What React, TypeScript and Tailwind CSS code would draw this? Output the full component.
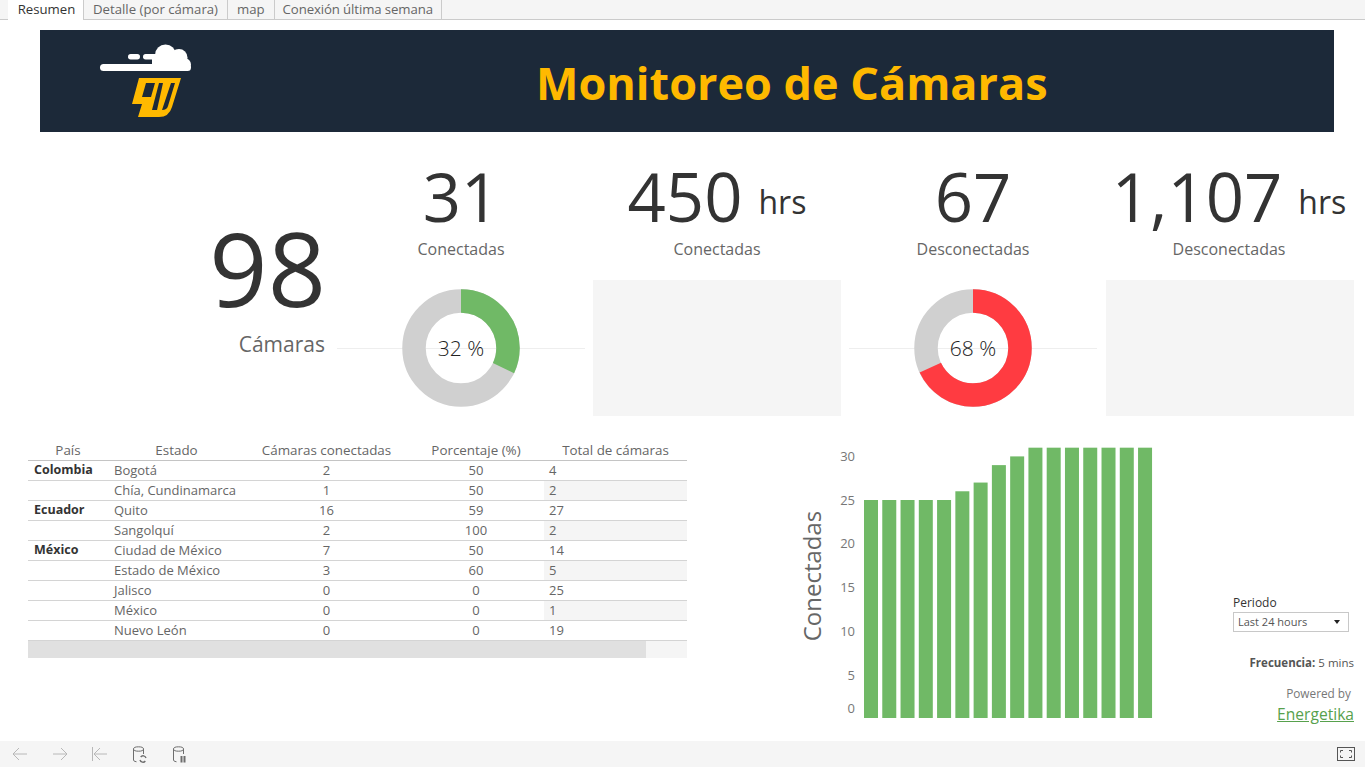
const font = "font-['Open_Sans',sans-serif]";

const tabs = ["Resumen", "Detalle (por cámara)", "map", "Conexión última semana"];

const rows = [
  { pais: "Colombia", estado: "Bogotá", con: 2, pct: 50, total: 4 },
  { pais: "", estado: "Chía, Cundinamarca", con: 1, pct: 50, total: 2 },
  { pais: "Ecuador", estado: "Quito", con: 16, pct: 59, total: 27 },
  { pais: "", estado: "Sangolquí", con: 2, pct: 100, total: 2 },
  { pais: "México", estado: "Ciudad de México", con: 7, pct: 50, total: 14 },
  { pais: "", estado: "Estado de México", con: 3, pct: 60, total: 5 },
  { pais: "", estado: "Jalisco", con: 0, pct: 0, total: 25 },
  { pais: "", estado: "México", con: 0, pct: 0, total: 1 },
  { pais: "", estado: "Nuevo León", con: 0, pct: 0, total: 19 },
];

const bars = [25, 25, 25, 25, 25, 26, 27, 29, 30, 31, 31, 31, 31, 31, 31, 31];
const ticks = [
  { label: "30", y: 461 },
  { label: "25", y: 505 },
  { label: "20", y: 548 },
  { label: "15", y: 592 },
  { label: "10", y: 636 },
  { label: "5", y: 680 },
  { label: "0", y: 713 },
];

const Logo = () => (
  <svg width="100" height="80" viewBox="0 0 100 80">
    <rect x="5" y="23" width="91" height="7" rx="3.5" fill="#fff" />
    <rect x="33" y="13" width="12" height="5.5" rx="2.7" fill="#fff" />
    <rect x="48" y="13" width="18" height="5.5" rx="2.7" fill="#fff" />
    <rect x="57" y="16" width="32" height="10" fill="#fff" />
    <circle cx="70.5" cy="14" r="10.5" fill="#fff" />
    <circle cx="84" cy="16.5" r="8.5" fill="#fff" />
    <circle cx="89.5" cy="23.5" r="6.5" fill="#fff" />
    <path d="M44 37H86L77 66Q74 76 64 76H43L47 63H37Z" fill="#ffb900" />
    <path d="M51 42H60L56 56H47Z" fill="#1c2939" />
    <path d="M64 42H68L62 69H57Z" fill="#1c2939" />
    <path d="M76 42H80L73 65Q72 69 67 69Z" fill="#1c2939" />
  </svg>
);

const Donut = ({ pct, color }: { pct: number; color: string }) => {
  const r = 47;
  const c = 2 * Math.PI * r;
  return (
    <div className="relative flex h-[136px] items-center justify-center">
      <div className="absolute inset-x-0 top-[68px] h-px bg-[#eeeeee]" />
      <svg width="118" height="118" viewBox="0 0 118 118" className="relative">
        <circle cx="59" cy="59" r={r} fill="none" stroke="#d0d0d0" strokeWidth="23.5" />
        <circle
          cx="59"
          cy="59"
          r={r}
          fill="none"
          stroke={color}
          strokeWidth="23.5"
          strokeDasharray={`${(c * pct) / 100} ${c}`}
          transform="rotate(-90 59 59)"
        />
      </svg>
      <span className="absolute mt-0.5 text-[21px] font-light text-[#222222]">{pct} %</span>
    </div>
  );
};

const Kpi = ({
  value,
  unit,
  label,
  last,
  children,
}: {
  value: string;
  unit?: string;
  label: string;
  last?: boolean;
  children: React.ReactNode;
}) => (
  <div className="flex w-[256px] flex-col">
    <div className="flex h-[76px] items-center justify-center whitespace-nowrap text-[#333333]">
      <span className="text-[67px] leading-none">{value}</span>
      {unit && <span className="ml-4 mt-3 text-[32px] leading-none">{unit}</span>}
    </div>
    <div className="mt-[5px] text-center text-[16px] leading-6 text-[#666666]">{label}</div>
    <div className={last ? "mt-[19px] pl-[5px] pr-[3px]" : "mt-[19px] px-1"}>{children}</div>
  </div>
);

const Table = () => (
  <div className="w-[659px] text-[13px] text-[#666666]">
    <div className="flex h-5 items-center border-b border-[#c4c4c4] text-center text-[13.4px]">
      <div className="w-20">País</div>
      <div className="w-[137px]">Estado</div>
      <div className="w-[163px]">Cámaras conectadas</div>
      <div className="w-[136px]">Porcentaje (%)</div>
      <div className="w-[143px]">Total de cámaras</div>
    </div>
    {rows.map((row) => (
      <div key={row.estado} className="flex h-5 items-center border-b border-[#d4d4d4]">
        <div className="w-20 pl-1.5 text-[12.5px] font-bold text-[#333333]">{row.pais}</div>
        <div className="w-[137px] pl-1.5">{row.estado}</div>
        <div className="w-[163px] text-center">{row.con}</div>
        <div className="w-[136px] text-center">{row.pct}</div>
        <div className={`h-full w-[143px] pl-[5px] leading-[19px] ${row.total === 2 || row.total === 5 || row.total === 1 ? "bg-[#f5f5f5]" : ""}`}>
          {row.total}
        </div>
      </div>
    ))}
    <div className="h-[17px] bg-[#f5f5f5]">
      <div className="h-full w-[618px] bg-[#e0e0e0]" />
    </div>
  </div>
);

const Chart = () => (
  <svg width="370" height="290" viewBox="790 440 370 290" className="block shrink-0">
    <text
      transform="rotate(-90 821 576)"
      x="821"
      y="576"
      textAnchor="middle"
      fontSize="24"
      fill="#666666"
    >
      Conectadas
    </text>
    {ticks.map((t) => (
      <text key={t.label} x="855" y={t.y} textAnchor="end" fontSize="13" fill="#777777">
        {t.label}
      </text>
    ))}
    {bars.map((v, i) => (
      <rect key={i} x={864 + i * 18.27} y={718 - v * 8.72} width="14" height={v * 8.72} fill="#70b966" />
    ))}
  </svg>
);

const ArrowLeft = () => (
  <svg width="16" height="14" viewBox="0 0 16 14" fill="none" stroke="#b8b8b8">
    <path d="M15 7H1M7 1L1 7l6 6" />
  </svg>
);

const ArrowRight = () => (
  <svg width="16" height="14" viewBox="0 0 16 14" fill="none" stroke="#b8b8b8">
    <path d="M1 7h14M9 1l6 6-6 6" />
  </svg>
);

const ArrowFirst = () => (
  <svg width="16" height="14" viewBox="0 0 16 14" fill="none" stroke="#b8b8b8">
    <path d="M.5 0v14M15 7H2M8 1L2 7l6 6" />
  </svg>
);

const DbIcon = ({ pause }: { pause?: boolean }) => (
  <svg width="16" height="17" viewBox="0 0 16 17" fill="none" stroke="#6e6e6e">
    <ellipse cx="6.5" cy="3" rx="5" ry="2.2" />
    <path d="M1.5 3v11q0 1.5 3 1.8M11.5 3v5" />
    {pause ? (
      <path d="M9.5 10v6.5M12.5 10v6.5" strokeWidth="2" />
    ) : (
      <path d="M14 12a3 3 0 0 0-5.3-1M8 14a3 3 0 0 0 5.3 1" strokeWidth="1.4" />
    )}
  </svg>
);

const FullscreenIcon = () => (
  <svg width="18" height="14" viewBox="0 0 18 14" fill="none" stroke="#555555">
    <rect x=".5" y=".5" width="17" height="13" />
    <path d="M3.5 5.5v-2h2.5M12 3.5h2.5v2M14.5 8.5v2H12M6 10.5H3.5v-2" />
  </svg>
);

const App = () => (
  <div className={`flex h-[767px] w-[1365px] flex-col overflow-hidden bg-white ${font}`}>
    <div className="flex h-5 shrink-0 border-b border-[#cbcbcb] bg-[#f5f5f5] pl-2 text-[13.2px] leading-[19px] text-[#666666]">
      {tabs.map((tab, i) => (
        <div
          key={tab}
          className={
            i === 0
              ? "-mb-px h-5 w-[76px] border-r border-[#cbcbcb] bg-white pl-[2px] text-center text-[#333333]"
              : i === 3
                ? "border-r border-[#cbcbcb] pl-[8px] pr-[8px] tracking-[-0.1px]"
                : "border-r border-[#cbcbcb] px-[9px]"
          }
        >
          {tab}
        </div>
      ))}
    </div>

    <div className="ml-10 mt-2.5 flex h-[102px] w-[1294px] shrink-0 items-center bg-[#1c2939]">
      <div className="ml-[55px]">
        <Logo />
      </div>
      <h1 className="ml-[341px] mt-1 text-[45px] font-bold text-[#ffb900]">Monitoreo de Cámaras</h1>
    </div>

    <div className="flex h-[284px] shrink-0 pt-7">
      <div className="flex w-[333px] flex-col items-end pr-2 pt-[57px]">
        <div className="-mr-px text-[102px] leading-none text-[#333333]">98</div>
        <div className="mt-[11px] text-[21px] leading-7 text-[#666666]">Cámaras</div>
      </div>
      <Kpi value="31" label="Conectadas">
        <Donut pct={32} color="#70b966" />
      </Kpi>
      <Kpi value="450" unit="hrs" label="Conectadas">
        <div className="h-[136px] bg-[#f5f5f5]" />
      </Kpi>
      <Kpi value="67" label="Desconectadas">
        <Donut pct={68} color="#ff3b41" />
      </Kpi>
      <Kpi value="1,107" unit="hrs" label="Desconectadas" last>
        <div className="h-[136px] bg-[#f5f5f5]" />
      </Kpi>
    </div>

    <div className="flex min-h-0 flex-1 pl-7 pt-[25px]">
      <Table />
      <div className="ml-[103px] -mt-px">
        <Chart />
      </div>
      <div className="ml-[73px] mt-[154px] flex w-[116px] flex-col items-end text-[12px] text-[#555555]">
        <div className="w-full leading-4 text-[#333333]">Periodo</div>
        <div className="mt-px flex h-5 w-full items-center justify-between border border-[#c8c8c8] pl-1 pr-2 text-[11px]">
          Last 24 hours
          <span className="h-0 w-0 border-x-[3.5px] border-t-[4px] border-x-transparent border-t-[#222222]" />
        </div>
        <div className="mr-[-5px] mt-[22px] text-[11.5px]">
          <b>Frecuencia:</b> 5 mins
        </div>
        <div className="mr-[-2px] mt-[14px] text-[11.8px] text-[#777777]">Powered by</div>
        <div className="mr-[-5px] mt-px text-[15.6px] leading-5 text-[#57a14d] underline">Energetika</div>
      </div>
    </div>

    <div className="flex h-[26px] shrink-0 items-center bg-[#f5f5f5] pl-3 pr-[10px]">
      <ArrowLeft />
      <div className="ml-6">
        <ArrowRight />
      </div>
      <div className="ml-6">
        <ArrowFirst />
      </div>
      <div className="ml-6">
        <DbIcon />
      </div>
      <div className="ml-6">
        <DbIcon pause />
      </div>
      <div className="ml-auto">
        <FullscreenIcon />
      </div>
    </div>
  </div>
);

export default App;
